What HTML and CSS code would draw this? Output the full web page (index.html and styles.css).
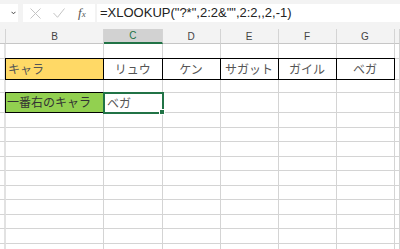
FILE: index.html
```html
<!DOCTYPE html>
<html lang="ja">
<head>
    <meta charset="UTF-8">
    <title>XLOOKUP</title>
    <link rel="stylesheet" href="styles.css">
</head>
<body>
    <div class="toolbar">
        <div class="namebox">
            <svg class="chev" width="5" height="4" viewBox="0 0 5 4"><path d="M0.5 0.8 L2.5 2.8 L4.5 0.8" fill="none" stroke="#444" stroke-width="1"/></svg>
        </div>
        <div class="fxbox">
            <svg class="ico cancel" width="11" height="11" viewBox="0 0 11 11"><path d="M0.5 0.5 L10.5 10.5 M10.5 0.5 L0.5 10.5" stroke="#c4c4c4" stroke-width="1" fill="none"/></svg>
            <svg class="ico enter" width="12" height="10" viewBox="0 0 12 10"><path d="M0.5 5 L4.5 9.3 L11.5 0.5" stroke="#c4c4c4" stroke-width="1" fill="none"/></svg>
            <span class="fx"><i>f</i><small>x</small></span>
        </div>
        <div class="formula">=XLOOKUP("?*",2:2&amp;"",2:2,,2,-1)</div>
    </div>

    <div class="sheet">
        <div class="hd"></div><div class="hd">B</div><div class="hd active">C</div><div class="hd">D</div><div class="hd">E</div><div class="hd">F</div><div class="hd">G</div><div class="hd"></div>

        <div class="rh"></div><div></div><div></div><div></div><div></div><div></div><div></div><div></div>

        <div class="rh"></div>
        <div class="bx yellow">キャラ</div>
        <div class="bx mid">リュウ</div>
        <div class="bx mid">ケン</div>
        <div class="bx mid">サガット</div>
        <div class="bx mid">ガイル</div>
        <div class="bx mid">ベガ</div>
        <div></div>

        <div class="rh"></div><div></div><div></div><div></div><div></div><div></div><div></div><div></div>

        <div class="rh"></div>
        <div class="bx green">一番右のキャラ</div>
        <div class="selected">ベガ</div>
        <div></div><div></div><div></div><div></div><div></div>

        <div class="rh"></div><div></div><div></div><div></div><div></div><div></div><div></div><div></div>
        <div class="rh"></div><div></div><div></div><div></div><div></div><div></div><div></div><div></div>
        <div class="rh"></div><div></div><div></div><div></div><div></div><div></div><div></div><div></div>
        <div class="rh"></div><div></div><div></div><div></div><div></div><div></div><div></div><div></div>
        <div class="rh"></div><div></div><div></div><div></div><div></div><div></div><div></div><div></div>
        <div class="rh"></div><div></div><div></div><div></div><div></div><div></div><div></div><div></div>
        <div class="rh"></div><div></div><div></div><div></div><div></div><div></div><div></div><div></div>
        <div class="rh"></div><div></div><div></div><div></div><div></div><div></div><div></div><div></div>
        <div class="rh"></div><div></div><div></div><div></div><div></div><div></div><div></div><div></div>
        <div class="rh"></div><div></div><div></div><div></div><div></div><div></div><div></div><div></div>
    </div>
</body>
</html>
```

FILE: styles.css
```css
body {
    margin: 0;
    width: 400px;
    height: 249px;
    overflow: hidden;
    background-color: #fff;
    font-family: "Liberation Sans", Arial, sans-serif;
}
.toolbar {
    height: 29px;
    box-sizing: border-box;
    padding-top: 4px;
    background-color: #f3f3f3;
    display: flex;
    align-items: flex-start;
}
.namebox {
    width: 18px;
    height: 18px;
    background-color: #fff;
    display: flex;
    align-items: center;
    justify-content: flex-end;
}
.namebox .chev {
    margin-right: 2px;
}
.fxbox {
    width: 72px;
    height: 18px;
    margin-left: 5px;
    background-color: #fff;
    display: flex;
    align-items: center;
}
.fxbox .cancel {
    margin-left: 7px;
}
.fxbox .enter {
    margin-left: 12px;
}
.fx {
    margin-left: 13px;
    color: #555;
    font-family: "Liberation Serif", serif;
    font-size: 13px;
    line-height: 12px;
}
.fx small {
    font-size: 9px;
    font-style: italic;
}
.formula {
    flex: 1;
    height: 18px;
    margin-left: 2px;
    padding-left: 3px;
    background-color: #fff;
    color: #222;
    font-size: 13px;
    line-height: 18px;
    white-space: nowrap;
}
.sheet {
    display: grid;
    grid-template-columns: 6px 98px 58.5px 58px 58px 58px 58px 1fr;
    grid-template-rows: 15px 15px 21px 13px 20px repeat(10, 14.5px);
    font-family: "Noto Sans CJK JP", sans-serif;
    font-size: 12px;
    color: #555;
}
.sheet > div {
    box-sizing: border-box;
    border-right: 1px solid #d4d4d4;
    border-bottom: 1px solid #d4d4d4;
    display: flex;
    align-items: center;
    padding-left: 2px;
    white-space: nowrap;
}
.sheet > .rh {
    border-right: 2px solid #e2e2e2;
}
.sheet > .hd {
    background-color: #f3f3f3;
    border-bottom-color: #c6c6c6;
    justify-content: center;
    padding-left: 0;
    font-family: "Liberation Sans", Arial, sans-serif;
    font-size: 10px;
    color: #444;
}
.sheet > .hd.active {
    background-color: #d2d2d2;
    border-bottom: 2px solid #217346;
    color: #217346;
}
.sheet > .bx {
    position: relative;
    padding-bottom: 2px;
}
.sheet > .bx::after {
    content: "";
    position: absolute;
    top: -1px;
    left: -1px;
    right: -1px;
    bottom: -1px;
    border: 1px solid #000;
}
.sheet > .mid {
    justify-content: center;
    padding-left: 0;
}
.sheet > .yellow {
    background-color: #ffd966;
}
.sheet > .green {
    background-color: #92d050;
    padding-left: 1px;
    color: #333;
}
.sheet > .selected {
    position: relative;
    padding-left: 3px;
}
.sheet > .selected::after {
    content: "";
    position: absolute;
    top: -1px;
    left: -1px;
    right: -2px;
    bottom: -2px;
    border: 2px solid #217346;
}
.sheet > .selected::before {
    content: "";
    position: absolute;
    right: -3px;
    bottom: -3px;
    width: 4px;
    height: 4px;
    background-color: #217346;
    border: 1px solid #fff;
    z-index: 1;
}
```
